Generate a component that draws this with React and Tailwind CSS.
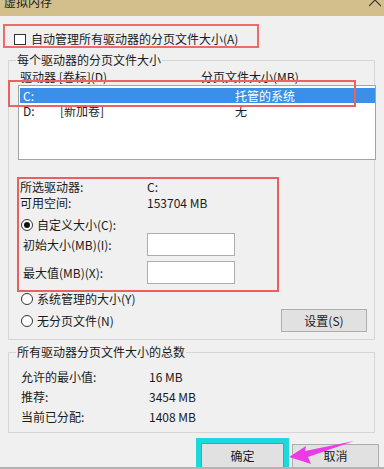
import React from "react";

/* Small Win32-style radio button */
const Radio = ({ checked }) => (
  <span className="w-[12px] h-[12px] rounded-full border border-[#333] bg-white flex items-center justify-center shrink-0">
    {checked && <span className="w-[6px] h-[6px] rounded-full bg-[#111]" />}
  </span>
);

const App = () => {
  return (
    <div className="relative w-[384px] h-[469px] overflow-hidden bg-[#f0f0f0] border-b-2 border-[#b4b4b4] text-[12px] leading-[14px] text-[#1a1a1a] font-['Microsoft_YaHei','Noto_Sans_CJK_SC',sans-serif]">
      {/* title bar */}
      <div className="h-[16px] bg-[#d2bf8c] overflow-hidden pl-[4px]">
        <div className="-mt-[5px]">虚拟内存</div>
      </div>
      <svg className="absolute left-[369px] top-0 w-[12px] h-[7px]" viewBox="0 0 12 7">
        <path d="M0 -6 L12 6 M12 -6 L0 6" stroke="#3a3a3a" strokeWidth="1.2" fill="none" />
      </svg>

      {/* auto-manage checkbox */}
      <div className="ml-[3px] mt-[8px] w-[256px] h-[24px] border-2 border-[#ee6b6b] flex items-center pt-[6px] pl-[9px]">
        <span className="w-[12px] h-[11px] border border-[#333] bg-white shrink-0" />
        <span className="ml-[5px]">自动管理所有驱动器的分页文件大小(A)</span>
      </div>

      {/* per-drive group */}
      <div className="relative ml-[8px] mt-[12px] w-[367px] h-[280px] border border-[#d6d6d6]">
        <span className="absolute left-[7px] -top-[8px] px-[1px] bg-[#f0f0f0]">每个驱动器的分页文件大小</span>

        <div className="flex pt-[9px] pl-[11px]">
          <span className="w-[181px]">驱动器 [卷标](D)</span>
          <span>分页文件大小(MB)</span>
        </div>

        <div className="ml-[9px] mt-[1px] w-[358px] h-[75px] bg-white border border-[#a3a3a3]">
          <div className="mt-[2px] ml-[1px] h-[15px] bg-[#3a90e8] text-white flex items-center pl-[3px]">
            <span className="w-[212px]">C:</span>
            <span>托管的系统</span>
          </div>
          <div className="ml-[1px] h-[15px] flex items-center pl-[3px]">
            <span className="w-[37px]">D:</span>
            <span className="w-[175px]">[新加卷]</span>
            <span>无</span>
          </div>
        </div>

        <div className="ml-[8px] mt-[17px] w-[262px] h-[115px] border-2 border-[#e86060] pt-[1px] pl-[1px]">
          <div className="flex">
            <span className="w-[127px]">所选驱动器:</span>
            <span>C:</span>
          </div>
          <div className="flex mt-[2px]">
            <span className="w-[127px]">可用空间:</span>
            <span>153704 MB</span>
          </div>
          <div className="flex items-center mt-[8px] pl-[1px]">
            <Radio checked />
            <span className="ml-[4px]">自定义大小(C):</span>
          </div>
          <div className="flex items-center mt-[1px] h-[23px] pl-[3px]">
            <span className="w-[124px]">初始大小(MB)(I):</span>
            <span className="w-[88px] h-[23px] bg-white border border-[#adadad]" />
          </div>
          <div className="flex items-center mt-[5px] h-[23px] pl-[3px]">
            <span className="w-[124px]">最大值(MB)(X):</span>
            <span className="w-[88px] h-[23px] bg-white border border-[#adadad]" />
          </div>
        </div>

        <div className="flex items-center h-[14px] pl-[12px]">
          <Radio />
          <span className="ml-[4px]">系统管理的大小(Y)</span>
        </div>
        <div className="flex items-center justify-between mt-[3px] pl-[12px] pr-[7px]">
          <div className="flex items-center">
            <Radio />
            <span className="ml-[4px]">无分页文件(N)</span>
          </div>
          <div className="w-[86px] h-[23px] border border-[#adadad] bg-[#e1e1e1] flex items-center justify-center">
            设置(S)
          </div>
        </div>
      </div>

      {/* totals group */}
      <div className="relative ml-[8px] mt-[12px] w-[367px] h-[81px] border border-[#d6d6d6] pt-[17px] pl-[12px]">
        <span className="absolute left-[7px] -top-[8px] px-[1px] bg-[#f0f0f0]">所有驱动器分页文件大小的总数</span>
        <div className="flex">
          <span className="w-[128px]">允许的最小值:</span>
          <span>16 MB</span>
        </div>
        <div className="flex mt-[6px]">
          <span className="w-[128px]">推荐:</span>
          <span>3454 MB</span>
        </div>
        <div className="flex mt-[6px]">
          <span className="w-[128px]">当前已分配:</span>
          <span>1408 MB</span>
        </div>
      </div>

      {/* dialog buttons */}
      <div className="flex justify-end items-start gap-[3px] pr-[5px] mt-[5px]">
        <div className="w-[93px] h-[40px] border-[5px] border-[#1ed9dc]">
          <div className="h-full border border-[#8a8a8a] bg-[#e1e1e1] flex justify-center pt-[5px]">确定</div>
        </div>
        <div className="w-[87px] h-[40px] mt-[6px] border border-[#adadad] bg-[#e1e1e1] flex justify-center pt-[4px]">
          取消
        </div>
      </div>

      {/* annotation overlays */}
      <div className="absolute left-[8px] top-[80px] w-[348px] h-[27px] border-2 border-[#ec6262]" />
      <svg className="absolute left-[286px] top-[436px] w-[72px] h-[32px]" viewBox="286 436 72 32">
        <polygon
          points="289,457 306,446 305,451 354,441 308,457 311,464"
          fill="#ea3be6"
        />
      </svg>
    </div>
  );
};

export default App;
